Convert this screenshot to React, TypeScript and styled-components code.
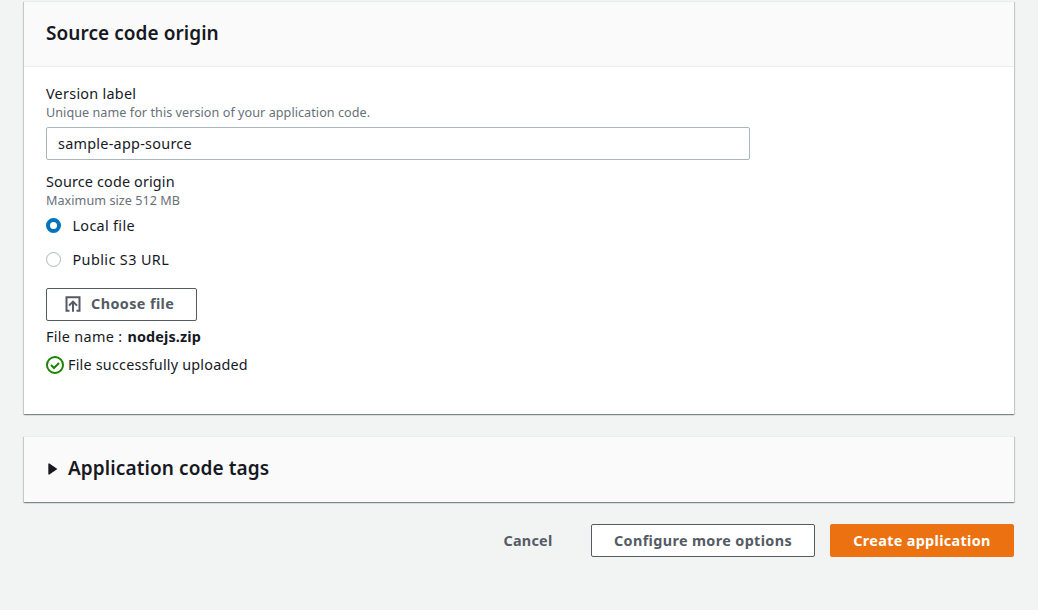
import React, { useState } from 'react';
import styled, { createGlobalStyle, css } from 'styled-components';

const GlobalStyle = createGlobalStyle`
  *, *::before, *::after { box-sizing: border-box; }
  body {
    margin: 0;
    background: #f2f3f3;
    color: #16191f;
    font-family: "Noto Sans", "Open Sans", sans-serif;
    font-size: 14.4px;
    line-height: 22px;
  }
`;

const Page = styled.main`
  display: flex;
  flex-direction: column;
  height: 610px;
  padding: 1px 24px 0;
  overflow: hidden;
`;

const Card = styled.section`
  margin-bottom: 22px;
  background: #fff;
  border-top: 1px solid #eaeded;
  box-shadow:
    0 1px 1px 0 rgba(0, 28, 36, 0.3),
    1px 1px 1px 0 rgba(0, 28, 36, 0.15),
    -1px 1px 1px 0 rgba(0, 28, 36, 0.15);
`;

const CardHeader = styled.header<{ $divided?: boolean }>`
  display: flex;
  align-items: center;
  height: 65px;
  padding: 0 22px ${({ $divided }) => ($divided ? 2 : 4)}px;
  background: #fafafa;
  ${({ $divided }) => $divided && css`border-bottom: 1px solid #eaeded;`}
`;

const Title = styled.h2<{ $spacing?: number }>`
  margin: 0;
  font-size: 19px;
  font-weight: 600;
  line-height: 24px;
  white-space: nowrap;
  letter-spacing: ${({ $spacing = 0 }) => $spacing}px;
`;

const CardBody = styled.div`
  height: 347px;
  padding: 16px 22px 0;
`;

const Text = styled.span<{ $spacing?: number }>`
  white-space: nowrap;
  letter-spacing: ${({ $spacing = 0 }) => $spacing}px;
`;

const Label = styled.div`
  height: 22px;
`;

const Hint = styled.div`
  height: 16px;
  color: #687078;
  font-size: 12.6px;
  line-height: 16px;
`;

const Input = styled.input`
  display: block;
  width: 704px;
  height: 33px;
  margin: 6px 0 11px;
  padding: 0 11px;
  border: 1px solid #aab7b8;
  border-radius: 2px;
  background: #fff;
  color: #16191f;
  font: inherit;
  letter-spacing: 0.27px;
  outline: none;
`;

const RadioGroup = styled.div`
  display: flex;
  flex-direction: column;
  gap: 12px;
  margin-top: 6px;
`;

const RadioRow = styled.label`
  display: flex;
  align-items: center;
  gap: 11.5px;
  height: 22px;
`;

const Radio = styled.input`
  appearance: none;
  width: 15px;
  height: 15px;
  margin: 0 0 1px;
  border: 1px solid #aab7b8;
  border-radius: 50%;
  background: #fff;
  &:checked { border: 4.5px solid #0073bb; }
`;

const Button = styled.button<{ $kind?: 'normal' | 'link' | 'primary' | 'upload'; $width: number }>`
  display: flex;
  align-items: center;
  justify-content: center;
  width: ${({ $width }) => $width}px;
  height: 33px;
  padding: 0;
  border: 1px solid #545b64;
  border-radius: 2px;
  background: #fff;
  color: #545b64;
  font: inherit;
  font-weight: 700;
  ${({ $kind }) => $kind === 'link' && css`border-color: transparent; background: transparent;`}
  ${({ $kind }) => $kind === 'primary' && css`border-color: #ec7211; background: #ec7211; color: #fff;`}
  ${({ $kind }) => $kind === 'upload' && css`justify-content: flex-start; gap: 10px; padding: 0 0 2px 18px;`}
`;

const UploadArea = styled.div`
  margin-top: 17px;
  svg { margin-top: 1px; }
`;

const FileName = styled.div`
  display: flex;
  gap: 5px;
  height: 22px;
  margin-top: 5px;
`;

const Status = styled.div`
  display: flex;
  align-items: center;
  gap: 4px;
  height: 22px;
  margin-top: 6px;
`;

const Expander = styled.svg`
  margin: 3px 10px 0 2px;
`;

const Actions = styled.footer`
  display: flex;
  justify-content: flex-end;
`;

const Spacer = styled.div<{ $width: number }>`
  width: ${({ $width }) => $width}px;
`;

const UploadIcon = () => (
  <svg width="16" height="16" viewBox="0 0 16 16" fill="none" stroke="#545b64" strokeWidth="2">
    <path d="M4.5 14.8H1.5V1.2h13v13.6h-3" />
    <path d="M8 15.8V5.8M4 9.6l4-4 4 4" />
  </svg>
);

const SuccessIcon = () => (
  <svg width="18" height="18" viewBox="0 0 18 18" fill="none" stroke="#1d8102" strokeWidth="2">
    <circle cx="9" cy="9" r="8" />
    <path d="M5 9l3 3 5-5" />
  </svg>
);

export default function App() {
  const [origin, setOrigin] = useState('local');
  return (
    <>
      <GlobalStyle />
      <Page>
        <Card>
          <CardHeader $divided>
            <Title $spacing={0.06}>Source code origin</Title>
          </CardHeader>
          <CardBody>
            <Label><Text $spacing={0.27}>Version label</Text></Label>
            <Hint><Text $spacing={0.055}>Unique name for this version of your application code.</Text></Hint>
            <Input defaultValue="sample-app-source" />
            <Label><Text $spacing={0.15}>Source code origin</Text></Label>
            <Hint><Text $spacing={0.05}>Maximum size 512 MB</Text></Hint>
            <RadioGroup>
              <RadioRow>
                <Radio type="radio" name="origin" checked={origin === 'local'} onChange={() => setOrigin('local')} />
                <Text $spacing={0.32}>Local file</Text>
              </RadioRow>
              <RadioRow>
                <Radio type="radio" name="origin" checked={origin === 's3'} onChange={() => setOrigin('s3')} />
                <Text $spacing={0.4}>Public S3 URL</Text>
              </RadioRow>
            </RadioGroup>
            <UploadArea>
              <Button $kind="upload" $width={151}><UploadIcon /><Text $spacing={0.4}>Choose file</Text></Button>
            </UploadArea>
            <FileName>
              <Text $spacing={0.32}>File name :</Text>
              <Text as="strong" $spacing={0.15}>nodejs.zip</Text>
            </FileName>
            <Status><SuccessIcon /><Text $spacing={0.2}>File successfully uploaded</Text></Status>
          </CardBody>
        </Card>
        <Card>
          <CardHeader>
            <Expander width="10" height="12" viewBox="0 0 10 12"><path d="M0.3 0.8L1 0.3L9.4 6L1 11.7L0.3 11.2Z" fill="#16191f" /></Expander>
            <Title $spacing={0.1}>Application code tags</Title>
          </CardHeader>
        </Card>
        <Actions>
          <Button $kind="link" $width={96}><Text $spacing={0.25}>Cancel</Text></Button>
          <Spacer $width={15} />
          <Button $width={224}><Text $spacing={0.36}>Configure more options</Text></Button>
          <Spacer $width={15} />
          <Button $kind="primary" $width={184}><Text $spacing={0.33}>Create application</Text></Button>
        </Actions>
      </Page>
    </>
  );
}
